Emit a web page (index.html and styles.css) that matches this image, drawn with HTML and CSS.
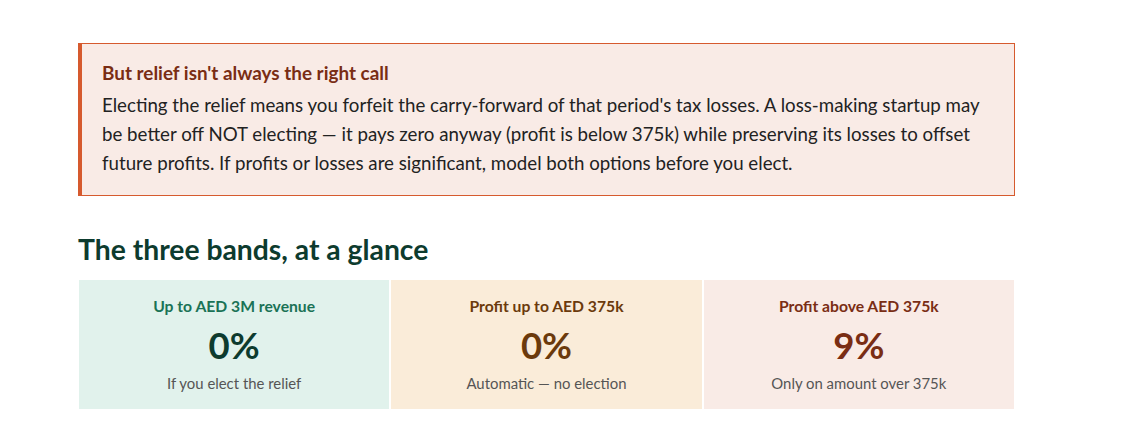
FILE: index.html
```html
<!DOCTYPE html>
<html lang="en">
<head>
<meta charset="utf-8">
<title>Small business relief</title>
<link rel="stylesheet" href="styles.css">
</head>
<body>
<main class="page">
  <aside class="callout">
    <h3 class="callout-title">But relief isn't always the right call</h3>
    <p class="callout-body">Electing the relief means you forfeit the carry-forward of that period's tax losses. A loss-making startup may be better off NOT electing — it pays zero anyway (profit is below 375k) while preserving its losses to offset future profits. If profits or losses are significant, model both options before you elect.</p>
  </aside>
  <h2 class="section-title">The three bands, at a glance</h2>
  <div class="bands">
    <div class="band band-green">
      <div class="band-label">Up to AED 3M revenue</div>
      <div class="band-rate">0%</div>
      <div class="band-note">If you elect the relief</div>
    </div>
    <div class="band band-amber">
      <div class="band-label">Profit up to AED 375k</div>
      <div class="band-rate">0%</div>
      <div class="band-note">Automatic — no election</div>
    </div>
    <div class="band band-red">
      <div class="band-label">Profit above AED 375k</div>
      <div class="band-rate">9%</div>
      <div class="band-note">Only on amount over 375k</div>
    </div>
  </div>
</main>
</body>
</html>
```
FILE: styles.css
```css
* { box-sizing: border-box; }
html, body { margin: 0; padding: 0; background: #fff; }
body {
  font-family: Lato, "Open Sans", "Liberation Sans", sans-serif;
  color: #222;
}
.page {
  width: 937px;
  margin-left: 78px;
  padding-top: 43px;
}
.callout {
  background: #f9ebe6;
  border: 1px solid #d65a2e;
  border-left: 4px solid #d65a2e;
  padding: 17px 24px 20px 20px;
  height: 153px;
}
.callout-title {
  margin: 0 0 6px;
  font-size: 18.9px;
  font-weight: 700;
  color: #7a2d14;
  line-height: 24px;
}
.callout-body {
  margin: 0;
  font-size: 18.7px;
  line-height: 29px;
  color: #222;
}
.section-title {
  margin: 35px 0 0;
  font-size: 28.3px;
  line-height: 36px;
  font-weight: 700;
  color: #0d3b2e;
}
.bands {
  margin-top: 13px;
  display: grid;
  grid-template-columns: 1fr 1fr 1fr;
  gap: 2px;
  padding: 0 1px;
}
.band {
  height: 129px;
  padding-top: 16px;
  text-align: center;
}
.band-label {
  font-size: 15.7px;
  font-weight: 700;
  line-height: 20px;
}
.band-rate {
  margin-top: 8px;
  font-size: 36.5px;
  font-weight: 700;
  line-height: 42px;
}
.band-note {
  margin-top: 7px;
  font-size: 14.9px;
  line-height: 20px;
  color: #555;
}
.band-green { background: #e1f2ec; }
.band-green .band-label { color: #1a7356; }
.band-green .band-rate { color: #0d3b2e; }
.band-amber { background: #faecd9; }
.band-amber .band-label, .band-amber .band-rate { color: #6b3a0c; }
.band-red { background: #f9ebe6; }
.band-red .band-label, .band-red .band-rate { color: #7a2d14; }
```
